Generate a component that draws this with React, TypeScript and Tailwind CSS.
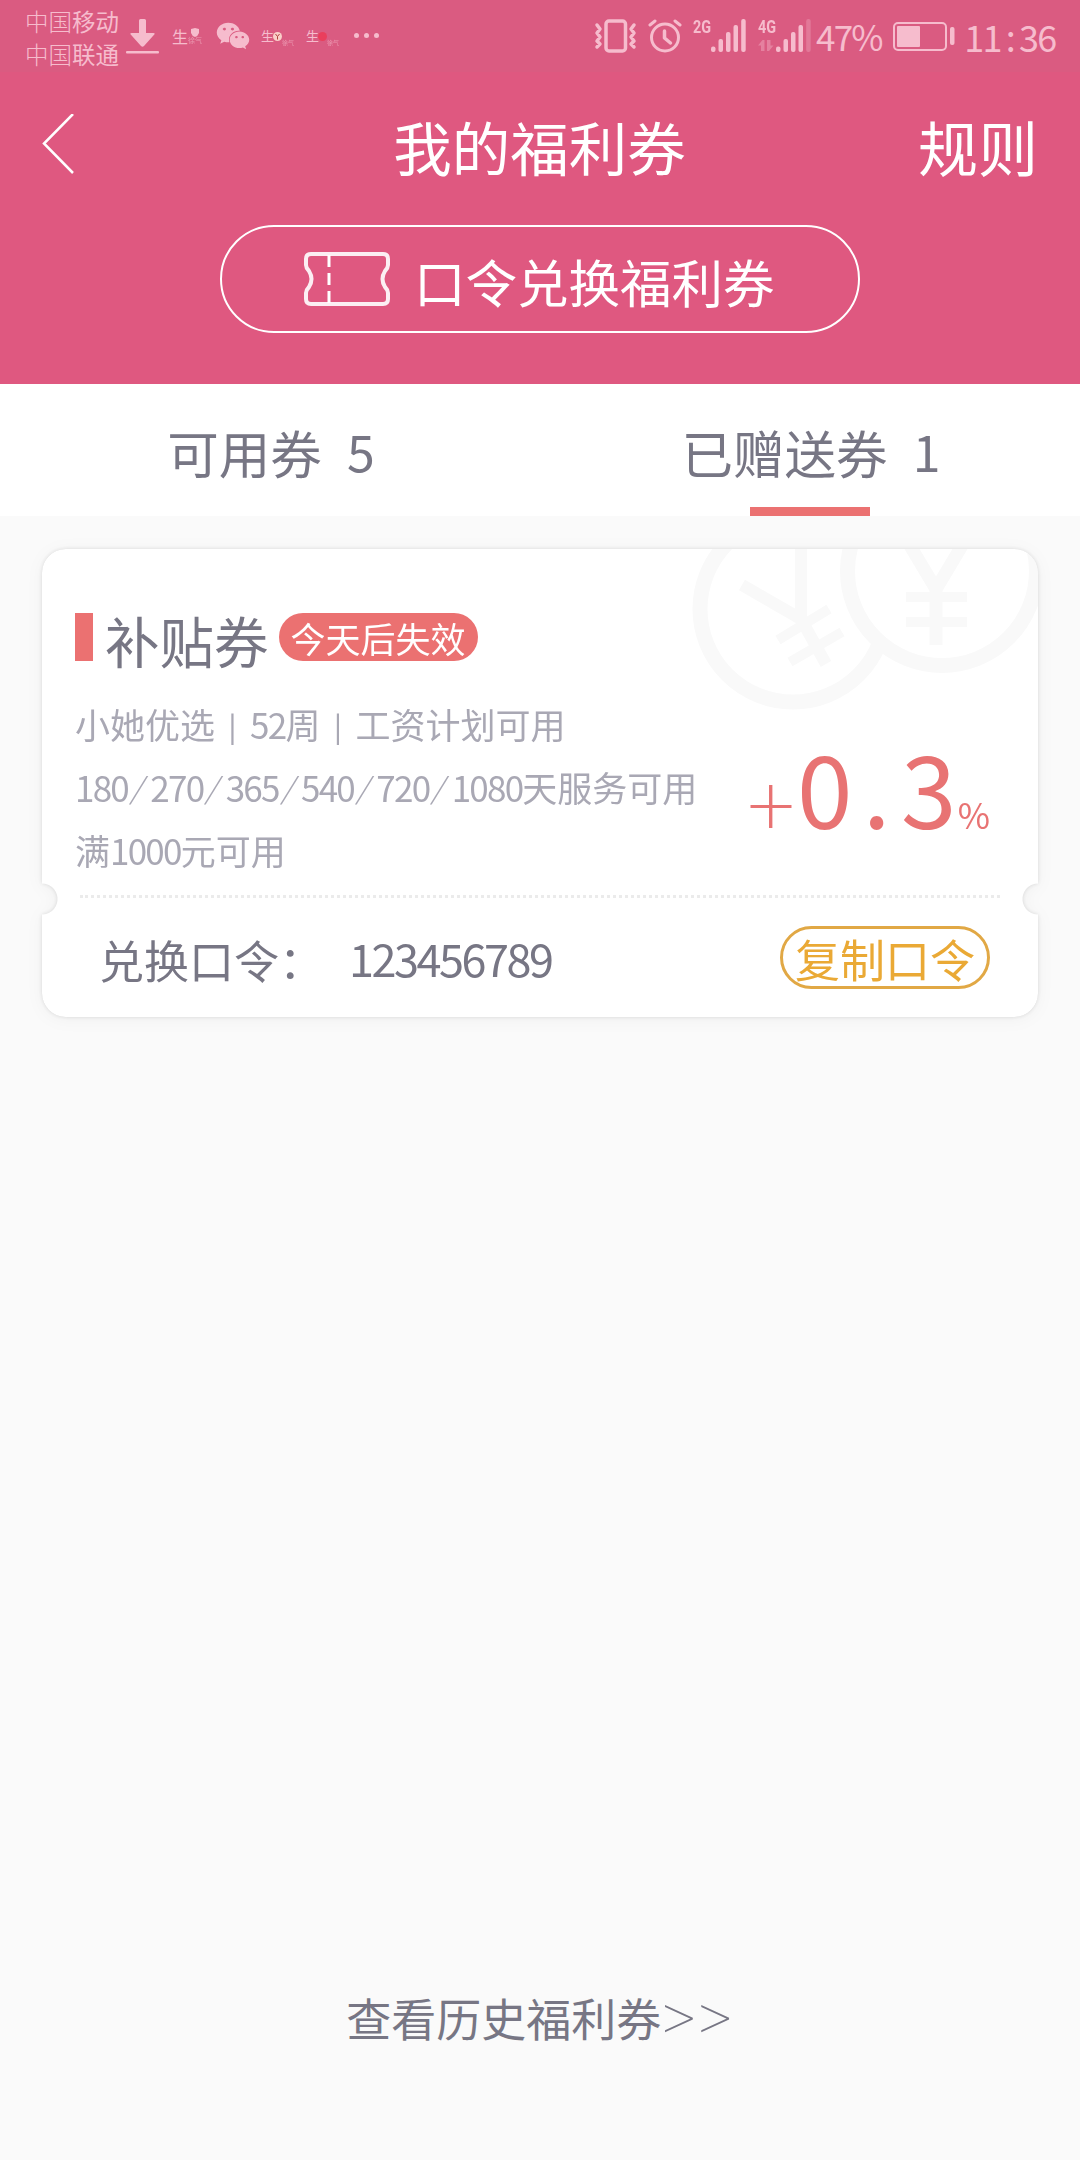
import React from 'react';
import { FaWeixin } from 'react-icons/fa';

interface TabItemProps {
  label: string;
  count: number;
  active?: boolean;
}

interface SignalProps {
  network: string;
  weak?: boolean;
}

const DownloadIcon = () => (
  <svg className="w-[33px] h-[35px]" viewBox="0 0 33 35" fill="currentColor">
    <path d="M13 1.5Q13 0 14.5 0h4Q20 0 20 1.5V14h7.5q2 0 .8 1.6L18 27q-1.500 1.500-3 0L4.700 15.600Q3.500 14 5.500 14H13z" />
    <rect x="0" y="32" width="33" height="2.500" rx="1" />
  </svg>
);

const VibrateIcon = () => (
  <svg className="w-[43px] h-[34px]" viewBox="0 0 43 34" fill="none" stroke="currentColor" strokeWidth="3.500" strokeLinecap="round" strokeLinejoin="round">
    <rect x="12" y="2" width="19.500" height="30" rx="3" />
    <path d="M3 6l3 4-3 4 3 4-3 4 3 3-3 3M40 6l-3 4 3 4-3 4 3 4-3 3 3 3" />
  </svg>
);

const AlarmIcon = () => (
  <svg className="w-[34px] h-[34px]" viewBox="0 0 34 34" fill="none" stroke="currentColor" strokeWidth="3" strokeLinecap="round">
    <circle cx="17" cy="18.500" r="13.500" />
    <path d="M2 6l5-4M32 6l-5-4" />
    <path d="M16.500 12v7l6 5" strokeLinejoin="round" strokeWidth="3.500" />
  </svg>
);

const Signal: React.FC<SignalProps> = ({ network, weak }) => (
  <div className="flex items-end w-[53px] h-[34px] relative">
    <span className="absolute left-0 top-0 w-[18px] font-['Roboto',sans-serif] font-bold text-[19px] leading-[15px] origin-left scale-x-[0.76]">{network}</span>
    <svg className="w-[53px] h-[34px]" viewBox="0 0 53 34" fill="currentColor">
      {weak && <path d="M4.500 21L0 26.500h3V32h3.500V21zM11 32l4.500-5.500h-3V21H9v11z" opacity="0.400" />}
      <rect x="18" y="27.500" width="4.500" height="5.500" rx="2" />
      <rect x="25.500" y="20" width="4.500" height="13" rx="2" />
      <rect x="33" y="13" width="4.500" height="20" rx="2" />
      <rect x="40.500" y="6" width="4.500" height="27" rx="2" />
      <rect x="48.200" y="0" width="4.500" height="33" rx="2" opacity={weak ? 0.3 : 1} />
    </svg>
  </div>
);

const BatteryIcon = () => (
  <svg className="w-[62px] h-[30px]" viewBox="0 0 62 30">
    <rect x="1" y="1" width="52" height="27" rx="4" fill="none" stroke="currentColor" strokeWidth="2" />
    <rect x="4" y="4" width="23" height="21" rx="1" fill="currentColor" />
    <rect x="57" y="5" width="4.500" height="18" rx="2" fill="currentColor" />
  </svg>
);

const AppNotice = ({ dot, mark }: { dot: string; mark?: boolean }) => (
  <div className="flex items-start w-[33px] h-[18px]">
    <span className="text-[13px] leading-[13px]">生</span>
    <span className={`w-[9px] h-[9px] mt-[3px] -ml-px shrink-0 rounded-full ${dot}`}>
      {mark && (
        <svg className="w-[9px] h-[9px]" viewBox="0 0 9 9" fill="none" stroke="#b0433f">
          <path d="M2.500 2l2 2.500 2-2.500M4.500 4.500V7.500" />
        </svg>
      )}
    </span>
    <span className="text-[6px] leading-[6px] mt-[11px] shrink-0 opacity-60">徐气</span>
  </div>
);

const StatusBar = () => (
  <div className="flex h-[72px] bg-[#da5b81] text-[#f6bccd]">
    <div className="w-[94px] ml-[25px] pt-[5px] text-[23.500px] font-light leading-[33px] whitespace-nowrap">
      <div>中国<span className="font-normal">移动</span></div>
      <div>中国<span className="font-normal">联通</span></div>
    </div>
    <div className="flex ml-[7px] pt-[19px]">
      <DownloadIcon />
      <div className="flex items-start w-[32px] ml-[13px] mt-[9px]">
        <span className="text-[16px] leading-[16px]">生</span>
        <span className="flex flex-col items-center">
          <svg className="w-[8px] h-[9px]" viewBox="0 0 8 9" fill="currentColor">
            <path d="M0 1l4-1 4 1v4Q7 8 4 9 1 8 0 5z" />
          </svg>
          <span className="text-[7px] leading-[7px] opacity-60">徐气</span>
        </span>
      </div>
      <FaWeixin className="w-[34px] h-[34px] ml-[12px]" />
      <div className="ml-[11px] mt-[10px]">
        <AppNotice dot="bg-[#f9cfc8]" mark />
      </div>
      <div className="ml-[12px] mt-[10px]">
        <AppNotice dot="bg-[#ea3e5c]" />
      </div>
      <div className="flex gap-[5px] ml-[15px] mt-[14px]">
        <span className="w-[5px] h-[5px] rounded-full bg-current" />
        <span className="w-[5px] h-[5px] rounded-full bg-current" />
        <span className="w-[5px] h-[5px] rounded-full bg-current" />
      </div>
    </div>
    <div className="flex ml-auto mr-[23px] pt-[19px]">
      <VibrateIcon />
      <div className="ml-[11px]">
        <AlarmIcon />
      </div>
      <div className="ml-[11px]">
        <Signal network="2G" />
      </div>
      <div className="ml-[12px]">
        <Signal network="4G" weak />
      </div>
      <span className="w-[66px] ml-[5px] -mt-px text-[35px] leading-[36px] tracking-[-0.05em] whitespace-nowrap">47%</span>
      <div className="ml-[11px] mt-[3px]">
        <BatteryIcon />
      </div>
      <div className="flex w-[92px] ml-[10px] -mt-px text-[36px] leading-[36px]">
        {'11:36'.split('').map((char, index) => (
          <span key={index} className="w-[18.300px] flex justify-center">{char}</span>
        ))}
      </div>
    </div>
  </div>
);

const TicketIcon = () => (
  <svg className="w-[88px] h-[54px]" viewBox="0 0 88 54" fill="none" stroke="white" strokeWidth="4">
    <path d="M8 2h72q5 0 5 5v6q0 3-3 6-5 8 0 16 3 3 3 6v6q0 5-5 5H8q-5 0-5-5v-6q0-3 3-6 5-8 0-16-3-3-3-6V7q0-5 5-5z" strokeOpacity="0.900" />
    <path d="M26 3v12M26 21v12M26 39v12" strokeWidth="3" />
  </svg>
);

const Header = () => (
  <header className="bg-[#df5880] text-white h-[384px]">
    <StatusBar />
    <div className="flex items-center justify-between h-[146px] pl-[42px] pr-[42px]">
      <svg className="w-[119px] h-[62px]" viewBox="0 0 119 62" fill="none" stroke="white" strokeWidth="2.500">
        <path d="M31 0L2 29.500 31 59" />
      </svg>
      <h1 className="mt-[2px] text-[58.500px] leading-[70px]">我的福利券</h1>
      <span className="mt-[2px] text-[60px] leading-[70px]">规则</span>
    </div>
    <button className="flex items-center w-[640px] h-[108px] mx-auto mt-[7px] pl-[81px] rounded-full border-2 border-white">
      <TicketIcon />
      <span className="mt-[3px] ml-[23px] text-[51.500px] leading-[60px]">口令兑换福利券</span>
    </button>
  </header>
);

const TabItem: React.FC<TabItemProps> = ({ label, count, active }) => (
  <div className="flex-1 flex flex-col items-center justify-between">
    <div className="flex mt-[35px] ml-[2px] text-[51.500px] leading-[66px]">
      {label}
      <span className="ml-[25px] -mt-[2px] text-[50px]">{count}</span>
    </div>
    {active && <div className="w-[120px] h-[9px] bg-[#eb7171]" />}
  </div>
);

const CoinPattern = () => (
  <svg className="absolute right-0 top-0 w-[346px] h-[161px]" viewBox="650 0 346 161" fill="none" stroke="#f9f9f9">
    <circle cx="751" cy="60" r="93" strokeWidth="15" />
    <path d="M700 36l59 34V0M759 70l25 45" strokeWidth="12" />
    <path d="M736 91l51-31M748 113l52-30" strokeWidth="10" />
    <circle cx="900" cy="22" r="94.500" strokeWidth="15" fill="white" />
    <path d="M864-10l30 50 30-50M894 36v60" strokeWidth="13" />
    <path d="M864 48h61M864 73h61" strokeWidth="10" />
  </svg>
);

const Bar = () => (
  <span className="inline-flex justify-center w-[35px]">
    <span className="text-[28px] leading-[40px] font-medium -translate-y-[2px]">|</span>
  </span>
);

const Num = ({ children }: { children: React.ReactNode }) => (
  <span className="tracking-[-0.050em]">{children}</span>
);

const Slash = () => (
  <span className="inline-flex w-[22.300px] justify-center">
    <span className="font-['Roboto',sans-serif] font-thin text-[37px] scale-x-[1.600]">/</span>
  </span>
);

const CouponCard = () => {
  const days = [180, 270, 365, 540, 720];

  return (
    <div className="mx-[42px] mt-[33px] [filter:drop-shadow(0_0_2px_rgba(0,0,0,0.120))_drop-shadow(0_2px_8px_rgba(0,0,0,0.040))]">
      <div className="relative h-[468px] bg-white rounded-[24px] overflow-hidden [mask-image:radial-gradient(circle_at_0_350px,transparent_15px,black_16px),radial-gradient(circle_at_100%_350px,transparent_15px,black_16px)] [mask-composite:intersect]">
        <CoinPattern />
        <div className="relative flex h-[346px]">
          <div className="pl-[33px] pt-[64px]">
            <div className="flex items-start h-[48px]">
              <span className="w-[18px] h-[48px] bg-[#eb7171]" />
              <h2 className="ml-[12px] text-[54.500px] leading-[54px] text-[#777684]">补贴券</h2>
              <span className="flex justify-center w-[199px] h-[48px] ml-[10px] rounded-full bg-[#eb7171] text-white text-[35px] leading-[49px]">今天后失效</span>
            </div>
            <div className="mt-[31px] text-[35px] leading-[63px] text-[#a9a8b4] whitespace-nowrap">
              <p className="h-[63px]">小她优选<Bar /><Num>52</Num>周<Bar />工资计划可用</p>
              <p className="h-[63px]">
                {days.map((day) => (
                  <React.Fragment key={day}><Num>{day}</Num><Slash /></React.Fragment>
                ))}
                <Num>1080</Num>天服务可用
              </p>
              <p>满<Num>1000</Num>元可用</p>
            </div>
          </div>
          <div className="flex items-baseline ml-auto mr-[48px] mt-[172px] text-[#e87373] leading-[130px]">
            <span className="mr-[4px] translate-y-[5px] font-['Roboto',sans-serif] font-extralight text-[84px]">+</span>
            <span className="flex mr-[3px] text-[100px]">
              <span className="w-[52px] flex justify-center">0</span>
              <span className="w-[52px] flex justify-center">.</span>
              <span className="w-[52px] flex justify-center">3</span>
            </span>
            <span className="text-[35px]">%</span>
          </div>
        </div>
        <div className="mx-[38px] border-t-[3px] border-dotted border-[#ebebeb]" />
        <div className="flex items-center h-[119px] pl-[57px] pr-[48px] pt-[1px] text-[#777684] text-[45px]">
          <span className="mt-[4px]">兑换口令：</span>
          <span className="ml-[25px] tracking-[-0.055em]">123456789</span>
          <button className="w-[210px] h-[63px] ml-auto -mt-[2px] rounded-full border-[3px] border-[#e1a845] text-[#eaa935] text-[45px] leading-[60px]">复制口令</button>
        </div>
      </div>
    </div>
  );
};

const App = () => {
  return (
    <div className="flex flex-col w-[1080px] h-[2160px] overflow-hidden bg-[#fafafa] font-['Noto_Sans_CJK_SC',sans-serif]">
      <Header />
      <nav className="flex h-[132px] bg-white text-[#777684]">
        <TabItem label="可用券" count={5} />
        <TabItem label="已赠送券" count={1} active />
      </nav>
      <CouponCard />
      <a className="flex justify-center mt-auto mb-[109px] text-[45px] leading-[66px] text-[#777684]">
        查看历史福利券
        <span className="font-['Roboto',sans-serif] font-thin text-[68px] tracking-[0.02em]">&gt;&gt;</span>
      </a>
    </div>
  );
};

export default App;
